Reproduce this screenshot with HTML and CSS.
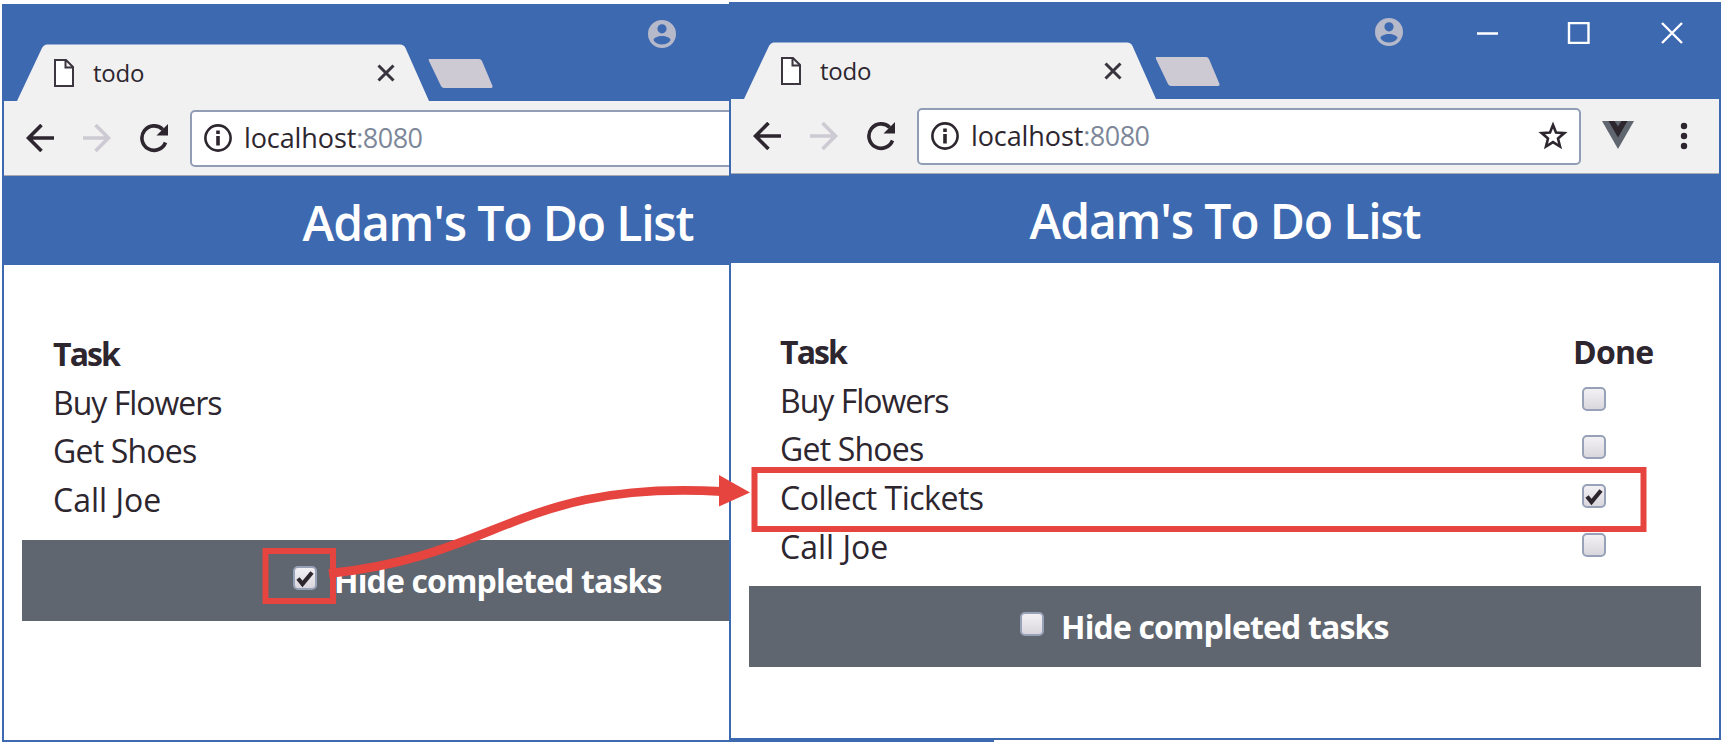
FILE: index.html
```html
<!DOCTYPE html>
<html lang="en">
<head>
<meta charset="utf-8">
<title>todo</title>
<link rel="stylesheet" href="styles.css">
</head>
<body>
<svg class="defs" width="0" height="0">
  <defs>
    <linearGradient id="boxfill" x1="0" y1="0" x2="0" y2="1"><stop offset="0" stop-color="#f4f2f5"/><stop offset="1" stop-color="#d8d6dc"/></linearGradient>
    <symbol id="tabshape" viewBox="0 0 500 57"><path d="M13 57L38 4Q40 .5 43 .5H396Q400 .5 401.500 4L425 57Z" fill="#f1f1f1"/><path d="M425 15H475Q477 15 478 17L488.500 42Q489 44 487 44H440Q438 44 437 42L425 17Q424.500 15 425 15Z" fill="#cdcad3"/></symbol>
    <symbol id="file" viewBox="0 0 22 30"><path d="M2 2H13L20 9V28H2ZM12.500 2V9.500H20" fill="#fff" stroke="#3b3640" stroke-width="2"/></symbol>
    <symbol id="cross" viewBox="0 0 18 18"><path d="M1.500 1.500L16.500 16.500M16.500 1.500L1.500 16.500" stroke="#38333c" stroke-width="3"/></symbol>
    <symbol id="user" viewBox="0 0 28 28"><path fill-rule="evenodd" d="M14 0a14 14 0 100 28a14 14 0 000-28ZM14 4.200a4.600 4.600 0 110 9.200a4.600 4.600 0 010-9.200ZM14 16c4 0 8.500 1.800 8.500 4.200c-2 3-5 4.300-8.500 4.300s-6.500-1.300-8.500-4.300C5.500 17.800 10 16 14 16Z" fill="#b5b9c9"/></symbol>
    <symbol id="back" viewBox="0 0 28 28"><path d="M15.500 1L2.500 14L15.500 27M2.500 14H28" fill="none" stroke="currentColor" stroke-width="3.600"/></symbol>
    <symbol id="reload" viewBox="0 0 30 30"><path d="M26.500 19.500A12.200 12.200 0 1123.800 6.500" fill="none" stroke="currentColor" stroke-width="3.600"/><path d="M29 1V12.500H17.500Z" fill="currentColor"/></symbol>
    <symbol id="info" viewBox="0 0 28 28"><circle cx="14" cy="14" r="12.600" fill="none" stroke="currentColor" stroke-width="2.600"/><path d="M12.200 6.500h3.600v3.400h-3.600zM12.200 12h3.600v9.500h-3.600z" fill="currentColor"/></symbol>
    <symbol id="star" viewBox="0 0 30 30"><path d="M15 4L18 11.600L26.300 12.100L20 17.500L22 25.500L15 21.100L8 25.500L10 17.500L3.700 12.100L12 11.600Z" fill="none" stroke="currentColor" stroke-width="2.600"/></symbol>
    <symbol id="vue" viewBox="0 0 32 28"><path d="M0 0H32L16 28Z" fill="#5f666f"/><path d="M6.500 0H12.500L16 5.500L19.500 0H25.500L16 16.500Z" fill="#2d262f"/></symbol>
    <symbol id="box" viewBox="0 0 24 24"><rect x="1" y="1" width="22" height="22" rx="4" fill="url(#boxfill)" stroke="#97a2b8" stroke-width="2"/></symbol>
    <symbol id="tick" viewBox="0 0 24 24"><path d="M5 12.500L9.500 18L19 6.500" fill="none" stroke="#2d262f" stroke-width="4.200"/></symbol>
  </defs>
</svg>
<main class="desktop">
  <section class="window window-back">
    <div class="titlebar">
      <svg class="tabshape"><use href="#tabshape"/></svg>
      <div class="tab"><svg class="file"><use href="#file"/></svg><span class="tab-name">todo</span><svg class="tab-close"><use href="#cross"/></svg></div>
      <svg class="user"><use href="#user"/></svg>
    </div>
    <div class="toolbar">
      <svg class="nav"><use href="#back"/></svg><svg class="nav nav-forward"><use href="#back"/></svg><svg class="reload"><use href="#reload"/></svg>
      <div class="address"><svg class="info"><use href="#info"/></svg><span class="url">localhost<span class="port">:8080</span></span></div>
    </div>
    <h1 class="banner">Adam's To Do List</h1>
    <div class="content">
      <div class="row head"><span class="tighter">Task</span></div>
      <div class="row"><span class="tight">Buy Flowers</span></div>
      <div class="row"><span class="snug">Get Shoes</span></div>
      <div class="row"><span>Call Joe</span></div>
      <div class="filter"><svg class="check"><use href="#box"/><use href="#tick"/></svg><span>Hide completed tasks</span></div>
    </div>
  </section>
  <section class="window window-front">
    <div class="titlebar">
      <svg class="tabshape"><use href="#tabshape"/></svg>
      <div class="tab"><svg class="file"><use href="#file"/></svg><span class="tab-name">todo</span><svg class="tab-close"><use href="#cross"/></svg></div>
      <svg class="user"><use href="#user"/></svg>
      <svg class="controls" viewBox="0 0 206 22"><path d="M0 11.500H21M92 1H111.500V21H92ZM185 1L205 21M205 1L185 21" fill="none" stroke="#fff" stroke-width="2.400"/></svg>
    </div>
    <div class="toolbar">
      <svg class="nav"><use href="#back"/></svg><svg class="nav nav-forward"><use href="#back"/></svg><svg class="reload"><use href="#reload"/></svg>
      <div class="address"><svg class="info"><use href="#info"/></svg><span class="url">localhost<span class="port">:8080</span></span><svg class="star"><use href="#star"/></svg></div>
      <svg class="vue"><use href="#vue"/></svg>
      <svg class="dots" viewBox="0 0 8 28"><circle cx="4" cy="4" r="3.200"/><circle cx="4" cy="14" r="3.200"/><circle cx="4" cy="24" r="3.200"/></svg>
    </div>
    <h1 class="banner">Adam's To Do List</h1>
    <div class="content">
      <div class="row head"><span class="tighter">Task</span><span class="snug">Done</span></div>
      <div class="row"><span class="tight">Buy Flowers</span><svg class="check"><use href="#box"/></svg></div>
      <div class="row"><span class="snug">Get Shoes</span><svg class="check"><use href="#box"/></svg></div>
      <div class="row"><span class="near">Collect Tickets</span><svg class="check"><use href="#box"/><use href="#tick"/></svg></div>
      <div class="row"><span>Call Joe</span><svg class="check"><use href="#box"/></svg></div>
      <div class="filter"><svg class="check"><use href="#box"/></svg><span>Hide completed tasks</span></div>
    </div>
  </section>
  <svg class="callout" viewBox="0 0 1725 746"><g fill="none" stroke="#e5443f"><rect x="265.500" y="551" width="67.500" height="50" stroke-width="6"/><rect x="754.500" y="470" width="889" height="59" stroke-width="6"/><path d="M329 573.500C500 556 520 480 722 491.500" stroke-width="8.800"/></g><path d="M719 475L750 492.500L719 506.500Z" fill="#e5443f"/></svg>
</main>
</body>
</html>
```
FILE: styles.css
```css
* { box-sizing: border-box; }
body { margin: 0; background: #fff; color: #2d262f; font-family: "Open Sans", "Noto Sans", sans-serif; overflow: hidden; }
svg { display: block; flex: none; }
.defs { position: absolute; }
.desktop { position: relative; width: 1725px; height: 746px; overflow: hidden; }
.window { position: absolute; width: 992px; height: 738px; background: #fff; border: 2px solid #3d69b1; }
.window-back { left: 2px; top: 4px; }
.window-front { left: 729px; top: 2px; }
.titlebar { position: relative; display: flex; height: 95px; background: #3d69b1; }
.tabshape { position: absolute; left: 0; top: 38px; width: 500px; height: 57px; }
.tab { position: relative; display: flex; align-items: center; width: 425px; margin-top: 38px; padding: 0 34px 0 49px; }
.file { width: 22px; height: 30px; }
.tab-name { flex: 1; margin-left: 18px; font-size: 24px; line-height: 34px; letter-spacing: -0.2px; }
.tab-close { width: 18px; height: 18px; }
.user { width: 28px; height: 28px; margin: 14px 0 0 219px; }
.controls { width: 206px; height: 22px; margin: 18px 0 0 74px; }
.toolbar { display: flex; align-items: center; height: 75px; padding-left: 22px; background: #f1f1f1; border-bottom: 1px solid #a9a9b3; }
.nav { width: 28px; height: 28px; }
.nav-forward { margin-left: 29px; color: #cdcad3; transform: scaleX(-1); }
.reload { width: 30px; height: 30px; margin-left: 28px; }
.address { display: flex; align-items: center; width: 664px; height: 57px; margin-left: 21px; padding: 0 11px 0 12px; background: #fff; border: 2px solid #909db5; border-radius: 5px; }
.info { width: 28px; height: 28px; }
.url { flex: 1; margin-left: 12px; font-size: 27px; line-height: 40px; letter-spacing: -0.1px; }
.port { color: #7d8799; letter-spacing: -0.5px; }
.star { width: 30px; height: 30px; }
.vue { width: 32px; height: 28px; margin: 0 0 2px 21px; }
.dots { width: 8px; height: 28px; margin-left: 46px; fill: #2d262f; }
.banner { display: flex; justify-content: center; align-items: center; height: 89px; margin: 0; padding-top: 5px; background: #3d69b1; color: #fff; font-size: 48px; font-weight: 600; line-height: 66px; letter-spacing: -1.15px; }
.content { padding: 64px 18px 0; }
.row { display: grid; grid-template-columns: 793px 1fr; align-items: center; height: 48.670px; padding-left: 31px; font-size: 32px; line-height: 48px; }
.row span { padding-top: 1px; }
.head { font-weight: 700; }
.near { letter-spacing: -0.5px; }
.snug { letter-spacing: -0.8px; }
.tight { letter-spacing: -1px; }
.tighter { letter-spacing: -1.900px; }
.check { width: 24px; height: 24px; }
.row .check { margin: 0 0 3px 9px; }
.filter { display: flex; align-items: center; height: 81px; margin-top: 16px; padding-left: 271px; gap: 17px; background: #5f666f; color: #fff; font-size: 32px; font-weight: 700; letter-spacing: -0.85px; }
.filter .check { margin-bottom: 5px; }
.callout { position: absolute; left: 0; top: 0; width: 1725px; height: 746px; }
```
